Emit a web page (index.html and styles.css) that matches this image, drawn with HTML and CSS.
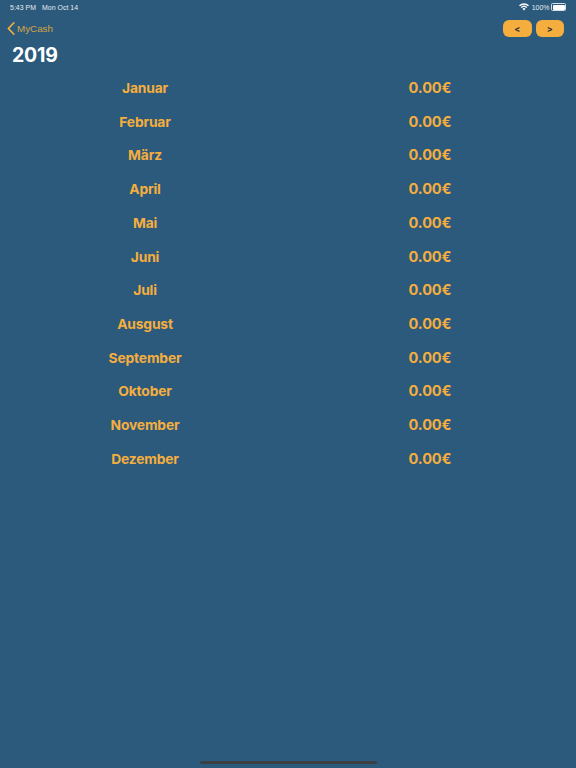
FILE: index.html
```html
<!DOCTYPE html>
<html lang="en">
<head>
    <meta charset="UTF-8">
    <meta name="viewport" content="width=device-width, initial-scale=1.0">
    <title>MyCash 2019</title>
    <link rel="stylesheet" href="styles.css">
</head>
<body>
    <div class="screen">
        <div class="status-bar">
            <div class="status-left">
                <span>5:43 PM</span>
                <span>Mon Oct 14</span>
            </div>
            <div class="status-right">
                <svg class="wifi" width="10" height="8" viewBox="0 0 10 8">
                    <path d="M5 7.6 3.4 5.8a2.3 2.3 0 0 1 3.2 0z" fill="#fff"/>
                    <path d="M2.7 5.1 1.7 4a4.8 4.8 0 0 1 6.6 0l-1 1.1a3.4 3.4 0 0 0-4.6 0z" fill="#fff"/>
                    <path d="M1 3.3 0 2.2a7.3 7.3 0 0 1 10 0L9 3.3a5.9 5.9 0 0 0-8 0z" fill="#fff"/>
                </svg>
                <span>100%</span>
                <div class="battery"><div class="battery-level"></div></div>
            </div>
        </div>

        <div class="nav-bar">
            <a class="back-link">
                <svg width="8" height="13" viewBox="0 0 8 13">
                    <path d="M6.7 1 1.4 6.5l5.3 5.5" fill="none" stroke="#f5ae3e" stroke-width="1.8" stroke-linecap="round" stroke-linejoin="round"/>
                </svg>
                <span>MyCash</span>
            </a>
            <div class="nav-buttons">
                <button class="nav-btn">&lt;</button>
                <button class="nav-btn">&gt;</button>
            </div>
        </div>

        <h1 class="year">2019</h1>

        <div class="months">
            <div class="month-row"><span>Januar</span><span class="amount">0.00€</span></div>
            <div class="month-row"><span>Februar</span><span class="amount">0.00€</span></div>
            <div class="month-row"><span>März</span><span class="amount">0.00€</span></div>
            <div class="month-row"><span>April</span><span class="amount">0.00€</span></div>
            <div class="month-row"><span>Mai</span><span class="amount">0.00€</span></div>
            <div class="month-row"><span>Juni</span><span class="amount">0.00€</span></div>
            <div class="month-row"><span>Juli</span><span class="amount">0.00€</span></div>
            <div class="month-row"><span>Ausgust</span><span class="amount">0.00€</span></div>
            <div class="month-row"><span>September</span><span class="amount">0.00€</span></div>
            <div class="month-row"><span>Oktober</span><span class="amount">0.00€</span></div>
            <div class="month-row"><span>November</span><span class="amount">0.00€</span></div>
            <div class="month-row"><span>Dezember</span><span class="amount">0.00€</span></div>
        </div>

        <div class="home-bar"></div>
    </div>
</body>
</html>
```

FILE: styles.css
```css
html, body {
    margin: 0;
    padding: 0;
}
body {
    background: #2b5a7c;
    font-family: Inter, "Liberation Sans", sans-serif;
}
.screen {
    width: 576px;
    height: 768px;
    display: flex;
    flex-direction: column;
    position: relative;
    overflow: hidden;
}
.status-bar {
    height: 14px;
    padding: 0 10px;
    display: flex;
    justify-content: space-between;
    align-items: center;
    font-family: "Liberation Sans", sans-serif;
    font-size: 6.9px;
    letter-spacing: 0.05px;
    color: #e6ecf1;
}
.status-left {
    display: flex;
    gap: 6px;
}
.status-right {
    display: flex;
    align-items: center;
    gap: 1.5px;
}
.wifi {
    margin-right: 1px;
}
.battery {
    width: 12px;
    height: 5px;
    border: 0.5px solid #d5dfe6;
    border-radius: 1.5px;
    padding: 0.5px;
}
.battery-level {
    height: 100%;
    background: #fff;
    border-radius: 1px;
}
.nav-bar {
    height: 28px;
    padding: 0 12px 0 7px;
    display: flex;
    justify-content: space-between;
    align-items: center;
}
.back-link {
    display: flex;
    align-items: center;
    gap: 2px;
    font-family: "Liberation Sans", sans-serif;
    font-size: 9.8px;
    color: #d9a545;
}
.nav-buttons {
    display: flex;
    gap: 4px;
}
.nav-btn {
    width: 28.5px;
    height: 17px;
    padding: 0;
    border: none;
    border-radius: 6px;
    background: #f5ae3e;
    color: #1f2a33;
    font-family: inherit;
    font-size: 9px;
    font-weight: 600;
}
.year {
    margin: 0;
    padding: 0 12px;
    height: 26px;
    font-size: 19.5px;
    line-height: 26px;
    font-weight: 700;
    letter-spacing: -0.2px;
    color: #fff;
}
.months {
    margin-top: 4px;
}
.month-row {
    display: grid;
    grid-template-columns: 290px 280px;
    height: 33.73px;
    line-height: 33.73px;
    text-align: center;
    font-size: 13.8px;
    font-weight: 700;
    letter-spacing: -0.15px;
    color: #f5ae3e;
}
.amount {
    font-size: 14.6px;
}
.home-bar {
    position: absolute;
    left: 200px;
    bottom: 4px;
    width: 177px;
    height: 3.5px;
    border-radius: 2px;
    background: #3c4043;
}
```
